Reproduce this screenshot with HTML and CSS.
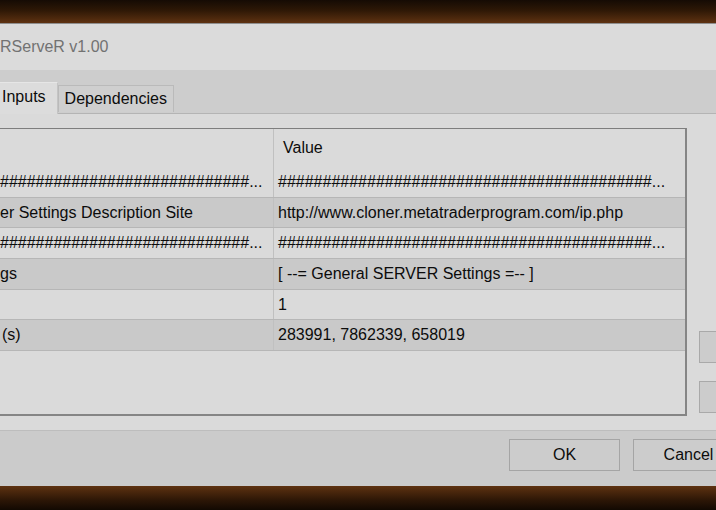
FILE: index.html
```html
<!DOCTYPE html>
<html>
<head>
<meta charset="utf-8">
<link rel="stylesheet" href="styles.css">
</head>
<body>
<div class="band band-top"></div>
<div class="window">
  <div class="titlebar">RServeR v1.00</div>
  <div class="tabstrip">
    <div class="tab tab-active">Inputs</div>
    <div class="tab">Dependencies</div>
  </div>
  <div class="content">
    <div class="grid">
      <div class="row head"><div class="cell name"></div><div class="cell value head-value">Value</div></div>
      <div class="row"><div class="cell name">############################...</div><div class="cell value">##########################################...</div></div>
      <div class="row dark"><div class="cell name">er Settings Description Site</div><div class="cell value">http://www.cloner.metatraderprogram.com/ip.php</div></div>
      <div class="row"><div class="cell name">############################...</div><div class="cell value">##########################################...</div></div>
      <div class="row dark"><div class="cell name">gs</div><div class="cell value">[ --= General SERVER Settings =-- ]</div></div>
      <div class="row"><div class="cell name"></div><div class="cell value">1</div></div>
      <div class="row dark"><div class="cell name name-s">(s)</div><div class="cell value">283991, 7862339, 658019</div></div>
    </div>
    <div class="side">
      <div class="side-btn"></div>
      <div class="side-btn"></div>
    </div>
  </div>
  <div class="footer">
    <div class="btn">OK</div>
    <div class="btn">Cancel</div>
  </div>
</div>
<div class="band band-bottom"></div>
</body>
</html>
```
FILE: styles.css
```css
html, body {
  margin: 0;
  padding: 0;
}
body {
  width: 716px;
  height: 510px;
  overflow: hidden;
  background: #000;
  font-family: "Liberation Sans", Arial, sans-serif;
  font-size: 16px;
  color: #0c0c0c;
}
.band-top {
  height: 23px;
  background: linear-gradient(#150b04, #2e1806 45%, #5e3211);
  border-bottom: 1px solid #8e8e8e;
}
.band-bottom {
  height: 24px;
  background: linear-gradient(#5e3211, #2c1606 60%, #120902);
}
.window {
  width: 790px;
  background: #dadada;
}
.titlebar {
  height: 46px;
  display: flex;
  align-items: center;
  color: #727272;
  background: #dbdbdb;
}
.tabstrip {
  height: 43px;
  background: #cdcdcd;
  border-bottom: 1px solid #b4b4b4;
  display: flex;
  align-items: flex-end;
}
.tab {
  box-sizing: border-box;
  height: 27px;
  padding: 0 6px;
  border: 1px solid #bababa;
  border-bottom: none;
  background: #cfcfcf;
  display: flex;
  align-items: center;
  margin-bottom: 1px;
}
.tab-active {
  height: 32px;
  padding: 0 11px 3px 2px;
  background: #dcdcdc;
  border-color: #c4c4c4;
  border-top-color: #e6e6e6;
  border-left: none;
  margin-bottom: -1px;
  position: relative;
}
.content {
  box-sizing: border-box;
  height: 316px;
  padding: 14px 0;
  display: flex;
  align-items: flex-start;
}
.grid {
  box-sizing: border-box;
  flex: none;
  width: 687px;
  height: 288px;
  border-top: 1px solid #7e7e7e;
  border-right: 2px solid #858585;
  border-bottom: 2px solid #858585;
  background: #dadada;
  display: flex;
  flex-direction: column;
}
.row {
  display: flex;
  height: 29.67px;
  border-bottom: 1px solid #b6b6b6;
  background: #dadada;
}
.row.dark {
  background: #c9c9c9;
}
.row.head {
  height: 38px;
  border-bottom: none;
}
.cell {
  box-sizing: border-box;
  white-space: nowrap;
  overflow: hidden;
  line-height: 29px;
}
.head .cell {
  line-height: 38px;
}
.name {
  width: 274px;
  flex: none;
  padding-left: 0;
  border-right: 1px solid #c0c0c0;
}
.name-s {
  padding-left: 2px;
}
.value {
  flex: 1;
  min-width: 0;
  padding: 0 4px;
}
.head-value {
  padding-left: 9px;
}
.side {
  flex: none;
  display: flex;
  flex-direction: column;
  gap: 18px;
  margin-left: 12px;
  padding-top: 203px;
}
.side-btn {
  box-sizing: border-box;
  width: 75px;
  height: 32px;
  background: #cccccc;
  border: 1px solid #a9a9a9;
}
.footer {
  box-sizing: border-box;
  height: 56px;
  background: #cbcbcb;
  border-top: 1px solid #bdbdbd;
  display: flex;
  justify-content: flex-start;
  align-items: flex-start;
  gap: 13px;
  padding: 8px 0 0 509px;
}
.btn {
  box-sizing: border-box;
  flex: none;
  width: 111px;
  height: 32px;
  background: #cccccc;
  border: 1px solid #a5a5a5;
  display: flex;
  align-items: center;
  justify-content: center;
}
```
